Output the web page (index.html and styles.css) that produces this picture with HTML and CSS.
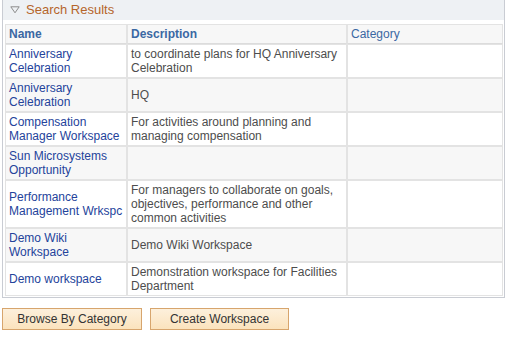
FILE: index.html
```html
<!DOCTYPE html>
<html>
<head>
<meta charset="utf-8">
<link rel="stylesheet" href="styles.css">
</head>
<body>
<div class="section">
  <div class="sec-head">
    <svg class="tri" width="10" height="8" viewBox="0 0 10 8"><path d="M0.8 0.8 L9.2 0.8 L5 6.8 Z" fill="none" stroke="#8c8c8c" stroke-width="1"/></svg>
    <span class="sec-title">Search Results</span>
  </div>
  <div class="sec-body">
    <table class="grid">
      <colgroup><col class="c1"><col class="c2"><col class="c3"></colgroup>
      <thead>
        <tr><th class="b">Name</th><th class="b">Description</th><th>Category</th></tr>
      </thead>
      <tbody>
        <tr><td><a href="#">Anniversary Celebration</a></td><td>to coordinate plans for HQ Anniversary Celebration</td><td></td></tr>
        <tr class="alt"><td><a href="#">Anniversary Celebration</a></td><td>HQ</td><td></td></tr>
        <tr><td><a href="#">Compensation Manager Workspace</a></td><td>For activities around planning and managing compensation</td><td></td></tr>
        <tr class="alt"><td><a href="#">Sun Microsystems Opportunity</a></td><td></td><td></td></tr>
        <tr><td><a href="#">Performance Management Wrkspc</a></td><td>For managers to collaborate on goals, objectives, performance and other common activities</td><td></td></tr>
        <tr class="alt"><td><a href="#">Demo Wiki Workspace</a></td><td>Demo Wiki Workspace</td><td></td></tr>
        <tr><td><a href="#">Demo workspace</a></td><td>Demonstration workspace for Facilities Department</td><td></td></tr>
      </tbody>
    </table>
  </div>
</div>
<div class="actions">
  <button class="btn btn1">Browse By Category</button>
  <button class="btn btn2">Create Workspace</button>
</div>
</body>
</html>
```

FILE: styles.css
```css
html, body {
  margin: 0;
  padding: 0;
  background: #ffffff;
}
body {
  font-family: Arial, "Liberation Sans", sans-serif;
  font-size: 12px;
  color: #4d4d4d;
}
.section {
  margin-left: 2px;
  width: 501px;
  border: 1px solid #c9ccd3;
  border-top: none;
}
.sec-head {
  height: 20px;
  background: #eef1f4;
  display: flex;
  align-items: center;
  padding-left: 7px;
  box-sizing: border-box;
}
.tri {
  display: block;
  margin-top: -1px;
}
.sec-title {
  margin-left: 6px;
  font-size: 13px;
  color: #b5652b;
  line-height: 16px;
}
.sec-body {
  padding: 4px 1px 1px 2px;
}
.grid {
  width: 498px;
  border-collapse: separate;
  border-spacing: 0;
  table-layout: fixed;
}
.c1 { width: 122px; }
.c2 { width: 220px; }
.c3 { width: 156px; }
.grid th, .grid td {
  border: 1px solid #e3e3e3;
  padding: 2px 2px 2px 3px;
  line-height: 14px;
  text-align: left;
  vertical-align: middle;
  font-size: 12px;
}
.grid th {
  background: #f7f7f7;
  color: #3b68a3;
  font-weight: normal;
  border-bottom-color: #dcdcdc;
}
.grid th.b {
  font-weight: bold;
}
.grid tr.alt td {
  background: #f7f7f7;
}
.grid a {
  color: #24439b;
  text-decoration: none;
}
.actions {
  display: flex;
  gap: 8px;
  margin: 10px 0 0 2px;
}
.btn {
  height: 22px;
  border: 1px solid #d7a56d;
  background: linear-gradient(#fdf0dc, #fbe3bd);
  font-family: Arial, "Liberation Sans", sans-serif;
  font-size: 12px;
  color: #333333;
  padding: 0;
  margin: 0;
}
.btn1 { width: 140px; }
.btn2 { width: 139px; }
```
